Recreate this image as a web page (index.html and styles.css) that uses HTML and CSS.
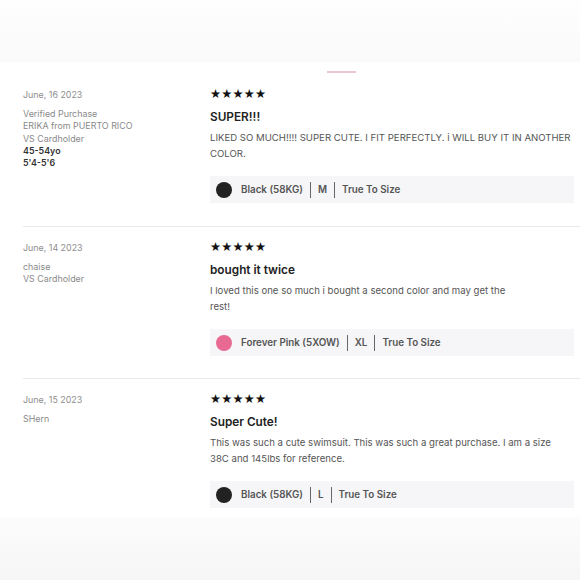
FILE: index.html
```html
<!DOCTYPE html>
<html>
<head>
<meta charset="utf-8">
<link rel="stylesheet" href="styles.css">
</head>
<body>
<div class="page">
  <div class="top-fade"></div>
  <div class="indicator-row"><span class="indicator"></span></div>
  <div class="reviews">
    <div class="review">
      <div class="meta">
        <div class="date">June, 16 2023</div>
        <div class="info">
          <div>Verified Purchase</div>
          <div>ERIKA from PUERTO RICO</div>
          <div>VS Cardholder</div>
          <div class="strong">45-54yo</div>
          <div class="strong">5'4-5'6</div>
        </div>
      </div>
      <div class="content">
        <div class="stars">★★★★★</div>
        <div class="title">SUPER!!!</div>
        <p class="body">LIKED SO MUCH!!!! SUPER CUTE. I FIT PERFECTLY. i WILL BUY IT IN ANOTHER COLOR.</p>
        <div class="attrs">
          <span class="dot dot-black"></span>
          <span class="attr">Black (58KG)</span>
          <span class="sep"></span>
          <span class="attr">M</span>
          <span class="sep"></span>
          <span class="attr">True To Size</span>
        </div>
      </div>
    </div>
    <div class="review">
      <div class="meta">
        <div class="date">June, 14 2023</div>
        <div class="info">
          <div>chaise</div>
          <div>VS Cardholder</div>
        </div>
      </div>
      <div class="content">
        <div class="stars">★★★★★</div>
        <div class="title">bought it twice</div>
        <p class="body">I loved this one so much i bought a second color and may get the<br>rest!</p>
        <div class="attrs">
          <span class="dot dot-pink"></span>
          <span class="attr">Forever Pink (5XOW)</span>
          <span class="sep"></span>
          <span class="attr">XL</span>
          <span class="sep"></span>
          <span class="attr">True To Size</span>
        </div>
      </div>
    </div>
    <div class="review">
      <div class="meta">
        <div class="date">June, 15 2023</div>
        <div class="info">
          <div>SHern</div>
        </div>
      </div>
      <div class="content">
        <div class="stars">★★★★★</div>
        <div class="title">Super Cute!</div>
        <p class="body body-narrow">This was such a cute swimsuit. This was such a great purchase. I am a size 38C and 145lbs for reference.</p>
        <div class="attrs">
          <span class="dot dot-black"></span>
          <span class="attr">Black (58KG)</span>
          <span class="sep"></span>
          <span class="attr">L</span>
          <span class="sep"></span>
          <span class="attr">True To Size</span>
        </div>
      </div>
    </div>
  </div>
  <div class="bottom-fade"></div>
</div>
</body>
</html>
```

FILE: styles.css
```css
* { box-sizing: border-box; }
html, body { margin: 0; padding: 0; background: #fff; }
body {
  font-family: Inter, "Liberation Sans", Arial, sans-serif;
  color: #333;
  width: 580px;
  height: 580px;
  overflow: hidden;
}
.page { display: flex; flex-direction: column; height: 580px; }
.top-fade {
  height: 62px;
  background: linear-gradient(180deg, #fefefe 0%, #fbfafa 100%);
  flex: none;
}
.indicator-row { height: 11px; display: flex; align-items: flex-end; flex: none; }
.indicator {
  display: block;
  width: 29px;
  height: 2px;
  margin-left: 327px;
  background: #efc5d2;
}
.reviews { padding-left: 23px; flex: none; }
.review {
  display: grid;
  grid-template-columns: 187px 364px;
  padding-top: 16px;
  padding-bottom: 23px;
  border-bottom: 1px solid #e9e9ea;
}
.review + .review { padding-top: 15px; padding-bottom: 22px; }
.review:last-child { border-bottom: none; padding-bottom: 0; }
.meta { font-size: 8.9px; color: #8a8a8a; }
.date { line-height: 12px; color: #8e8e8e; }
.info { margin-top: 7px; line-height: 12.3px; color: #8a8a8a; }
.strong { color: #333; font-weight: 600; }
.stars {
  font-family: "DejaVu Sans", sans-serif;
  font-size: 12.3px;
  line-height: 11px;
  letter-spacing: 0.2px;
  color: #111;
}
.title {
  margin-top: 11px;
  font-size: 11.8px;
  line-height: 13px;
  font-weight: 600;
  color: #222;
}
.body {
  margin: 6px 0 0;
  font-size: 9.6px;
  line-height: 16px;
  color: #555;
}
.body-narrow { max-width: 348px; }
.attrs {
  margin-top: 14px;
  height: 27px;
  background: #f6f6f8;
  display: flex;
  align-items: center;
  padding-left: 6px;
  font-size: 9.8px;
  font-weight: 600;
  color: #555;
}
.dot { width: 16px; height: 16px; border-radius: 50%; margin-right: 9px; flex: none; }
.dot-black { background: #222; }
.dot-pink { background: #e86a93; }
.sep { width: 1px; height: 16px; background: #666; margin: 0 7px; }
.bottom-fade {
  margin-top: auto;
  height: 63px;
  background: linear-gradient(180deg, #fcfcfc 0%, #f6f6f7 100%);
  flex: none;
}
```
